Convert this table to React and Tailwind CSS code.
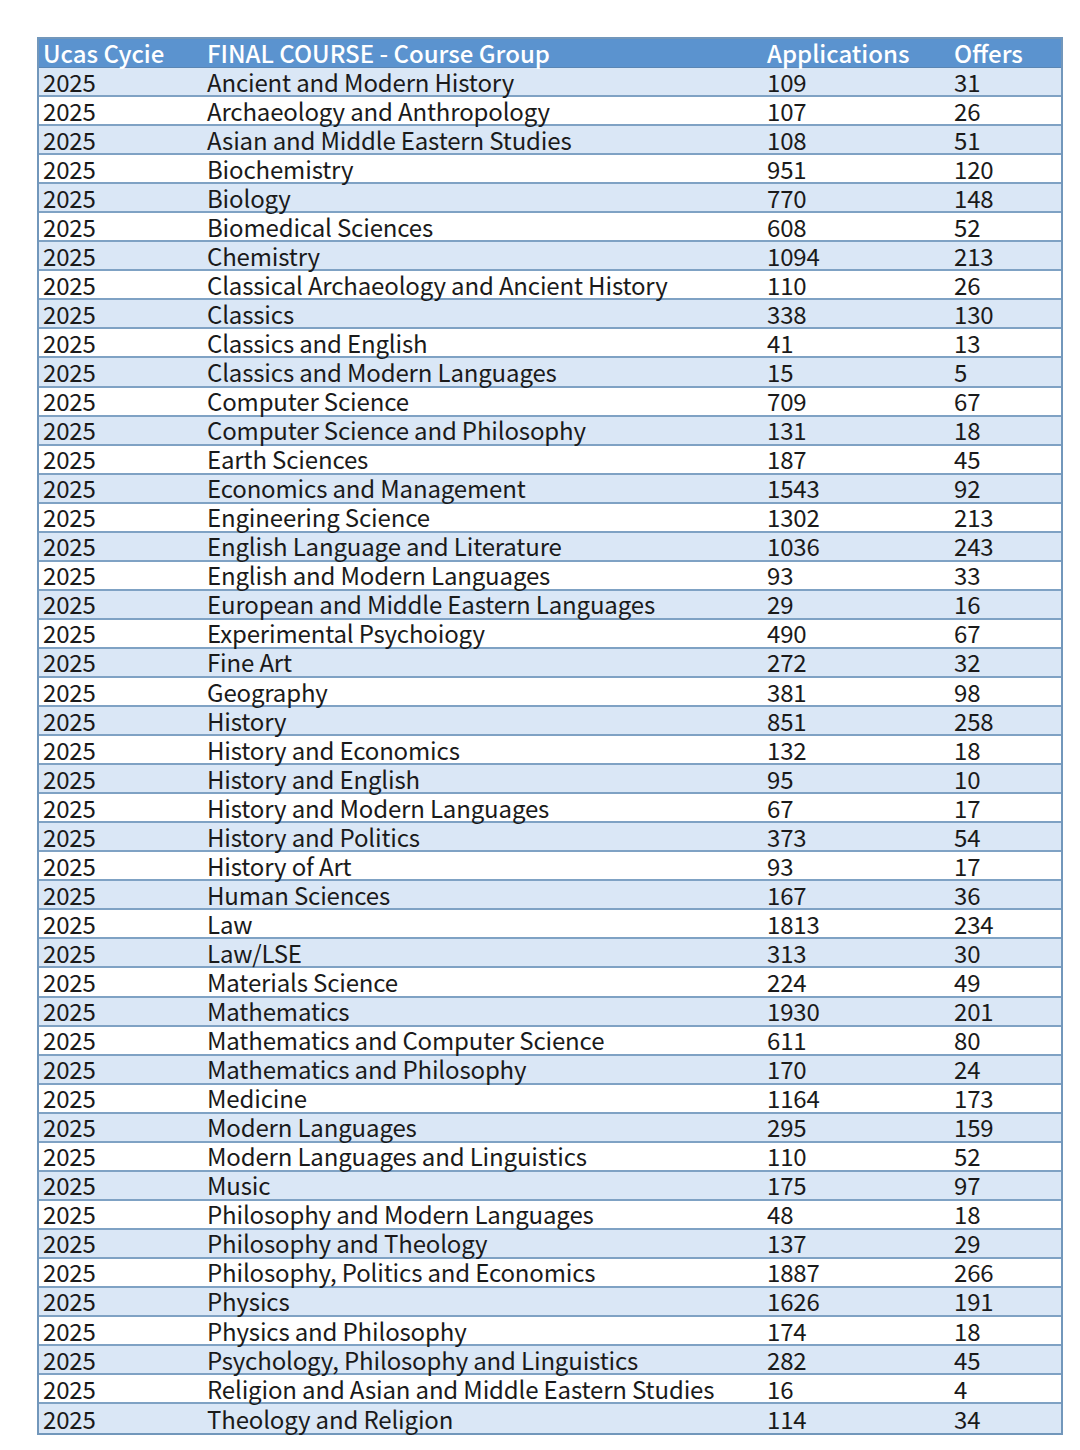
import React from "react";

const rows = [
  ["Ancient and Modern History", 109, 31],
  ["Archaeology and Anthropology", 107, 26],
  ["Asian and Middle Eastern Studies", 108, 51],
  ["Biochemistry", 951, 120],
  ["Biology", 770, 148],
  ["Biomedical Sciences", 608, 52],
  ["Chemistry", 1094, 213],
  ["Classical Archaeology and Ancient History", 110, 26],
  ["Classics", 338, 130],
  ["Classics and English", 41, 13],
  ["Classics and Modern Languages", 15, 5],
  ["Computer Science", 709, 67],
  ["Computer Science and Philosophy", 131, 18],
  ["Earth Sciences", 187, 45],
  ["Economics and Management", 1543, 92],
  ["Engineering Science", 1302, 213],
  ["English Language and Literature", 1036, 243],
  ["English and Modern Languages", 93, 33],
  ["European and Middle Eastern Languages", 29, 16],
  ["Experimental Psychoiogy", 490, 67],
  ["Fine Art", 272, 32],
  ["Geography", 381, 98],
  ["History", 851, 258],
  ["History and Economics", 132, 18],
  ["History and English", 95, 10],
  ["History and Modern Languages", 67, 17],
  ["History and Politics", 373, 54],
  ["History of Art", 93, 17],
  ["Human Sciences", 167, 36],
  ["Law", 1813, 234],
  ["Law/LSE", 313, 30],
  ["Materials Science", 224, 49],
  ["Mathematics", 1930, 201],
  ["Mathematics and Computer Science", 611, 80],
  ["Mathematics and Philosophy", 170, 24],
  ["Medicine", 1164, 173],
  ["Modern Languages", 295, 159],
  ["Modern Languages and Linguistics", 110, 52],
  ["Music", 175, 97],
  ["Philosophy and Modern Languages", 48, 18],
  ["Philosophy and Theology", 137, 29],
  ["Philosophy, Politics and Economics", 1887, 266],
  ["Physics", 1626, 191],
  ["Physics and Philosophy", 174, 18],
  ["Psychology, Philosophy and Linguistics", 282, 45],
  ["Religion and Asian and Middle Eastern Studies", 16, 4],
  ["Theology and Religion", 114, 34],
];

export default function App() {
  return (
    <div className="w-[1080px] h-[1450px] bg-white pt-[37px] pl-[37px]" style={{ fontFamily: '"Noto Sans CJK SC", "Noto Sans", sans-serif' }}>
      <div className="w-[1026px] border-2 border-[#7297bb]">
        <div className="flex h-[29px] items-center bg-[#5b93cf] text-white text-[24px] font-medium leading-none border-b border-[#5a86b4]">
          <div className="w-[168px] pl-[4px]">Ucas Cycie</div>
          <div className="w-[560px]">FINAL COURSE - Course Group</div>
          <div className="w-[187px]">Applications</div>
          <div className="flex-1">Offers</div>
        </div>
        {rows.map((r, i) => (
          <div
            key={i}
            className={
              "flex h-[29.05px] items-center text-[24px] tracking-[-0.15px] leading-none text-[#1a1a1a] border-b-2 border-[#7fa2c4] last:border-b-0 " +
              (i % 2 === 0 ? "bg-[#dae7f6]" : "bg-white")
            }
          >
            <div className="w-[168px] pl-[4px]">2025</div>
            <div className="w-[560px] whitespace-nowrap">{r[0]}</div>
            <div className="w-[187px]">{r[1]}</div>
            <div className="flex-1">{r[2]}</div>
          </div>
        ))}
      </div>
    </div>
  );
}
